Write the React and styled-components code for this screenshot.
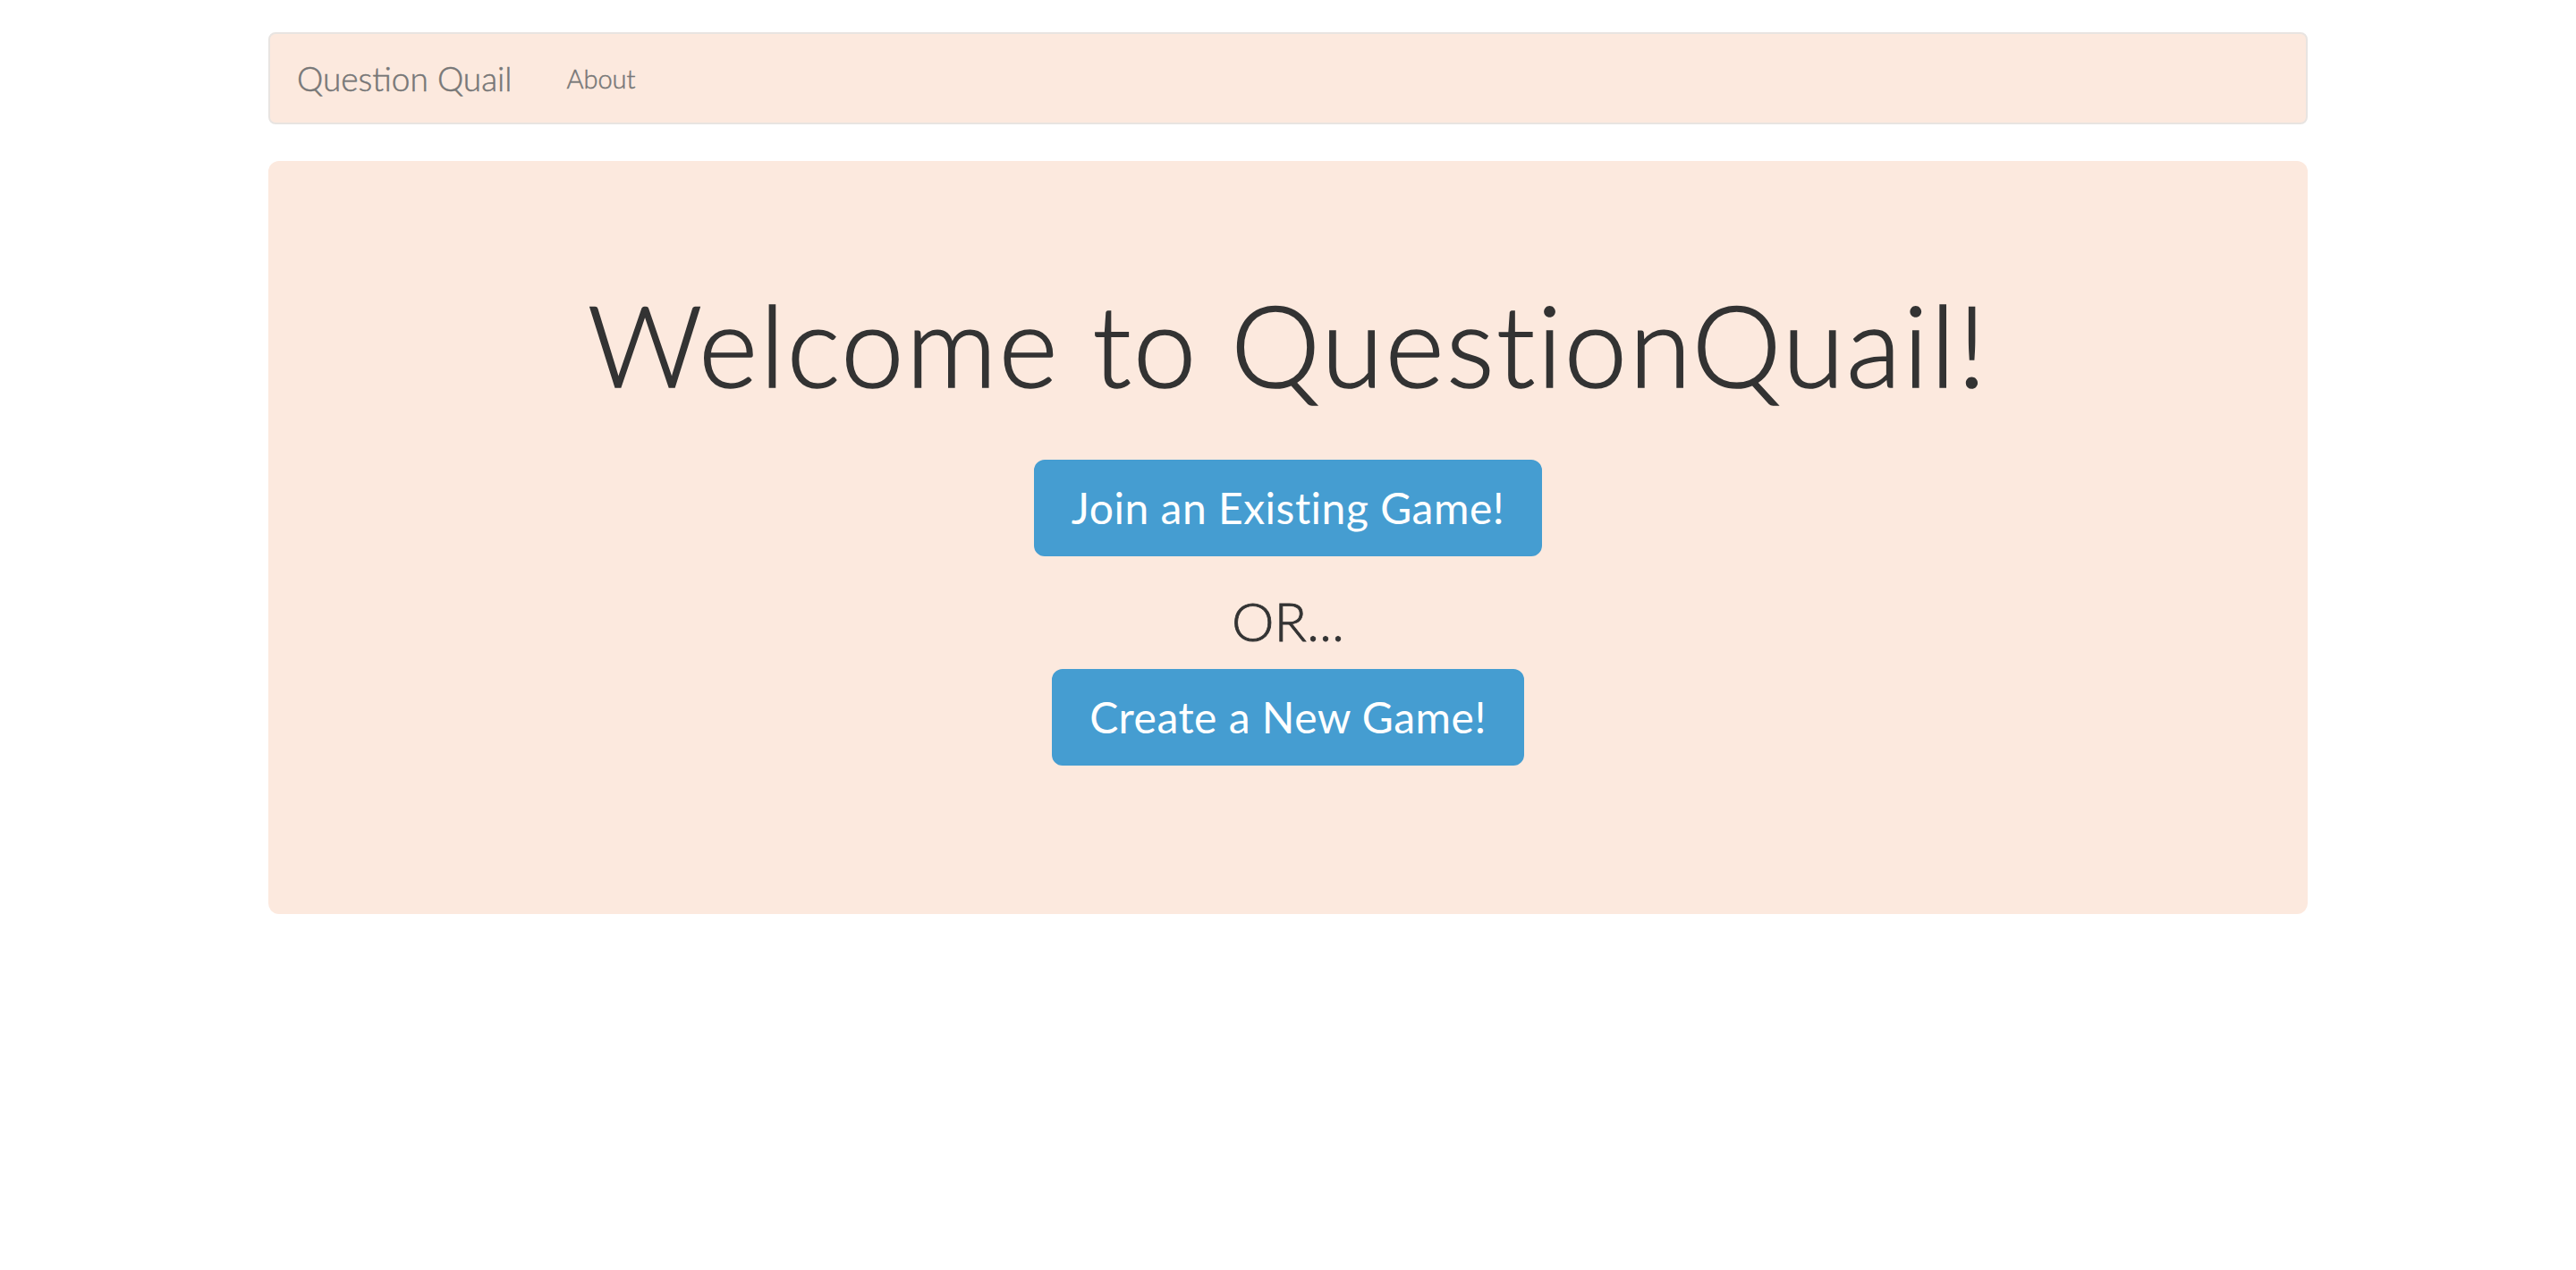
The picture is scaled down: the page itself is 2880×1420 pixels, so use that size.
import React from 'react';
import styled, { createGlobalStyle } from 'styled-components';

const GlobalStyle = createGlobalStyle`
  html, body {
    margin: 0;
    padding: 0;
    background: #ffffff;
  }
  body {
    font-family: Lato, "Open Sans", "Liberation Sans", sans-serif;
    color: #333333;
  }
`;

const Page = styled.div`
  width: 2280px;
  margin: 36px auto 0;
`;

const Navbar = styled.nav`
  display: flex;
  align-items: center;
  height: 103px;
  box-sizing: border-box;
  background: #fce9de;
  border: 2px solid #e8e4e1;
  border-radius: 8px;
  padding: 0 30px;
  margin-bottom: 41px;
`;

const Brand = styled.a`
  font-size: 37px;
  font-weight: 300;
  -webkit-text-stroke: 0.5px #777777;
  color: #777777;
  text-decoration: none;
  padding-right: 31px;
`;

const NavLink = styled.a`
  font-size: 29px;
  font-weight: 300;
  -webkit-text-stroke: 0.5px #777777;
  color: #777777;
  text-decoration: none;
  padding: 0 30px;
`;

const Jumbotron = styled.section`
  display: flex;
  flex-direction: column;
  align-items: center;
  background: #fce9de;
  border-radius: 12px;
  padding: 96px 120px 166px;
`;

const Title = styled.h1`
  margin: 39px 0 60px;
  font-size: 126px;
  line-height: 139px;
  font-weight: 300;
  -webkit-text-stroke: 1.6px #333333;
  color: #333333;
  letter-spacing: 2.4px;
`;

const GameButton = styled.button`
  font-family: inherit;
  font-size: 48px;
  line-height: 64px;
  padding: 20px 40px;
  border: 2px solid #459dd1;
  border-radius: 12px;
  background: #459dd1;
  color: #ffffff;
  cursor: pointer;
  letter-spacing: 0.5px;
`;

const Divider = styled.h2`
  margin: 39px 0 21px;
  font-size: 60px;
  line-height: 66px;
  font-weight: 300;
  -webkit-text-stroke: 0.8px #333333;
  color: #333333;
`;

export default function App() {
  return (
    <>
      <GlobalStyle />
      <Page>
        <Navbar>
          <Brand href="#">Question Quail</Brand>
          <NavLink href="#">About</NavLink>
        </Navbar>
        <Jumbotron>
          <Title>Welcome to QuestionQuail!</Title>
          <GameButton>Join an Existing Game!</GameButton>
          <Divider>OR...</Divider>
          <GameButton>Create a New Game!</GameButton>
        </Jumbotron>
      </Page>
    </>
  );
}
